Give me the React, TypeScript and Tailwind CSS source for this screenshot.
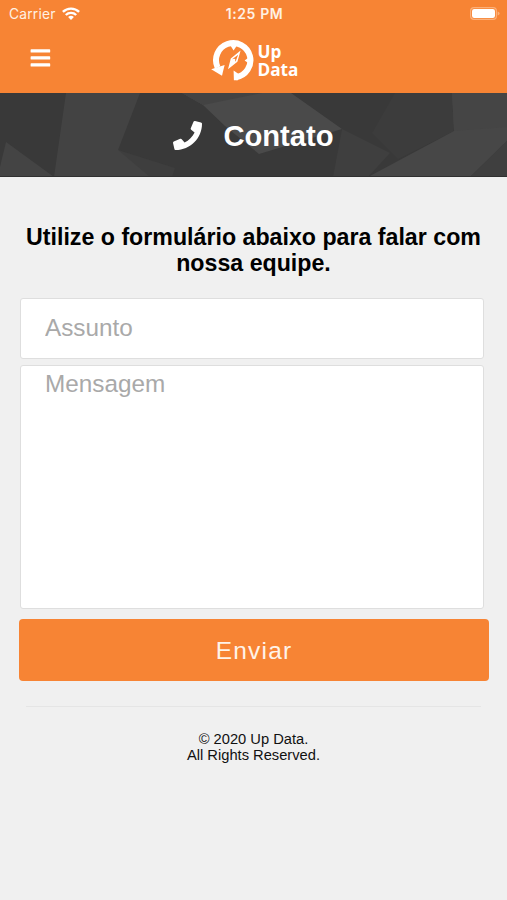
import { useState } from "react";
import { FaPhone } from "react-icons/fa";

function StatusBar() {
  return (
    <div className="grid h-7 grid-cols-3 items-center pl-[9px] pr-[7px] font-['Inter',sans-serif] text-[#fff1e4]">
      <div className="flex items-center gap-[6px]">
        <span className="pt-px text-[13.8px] leading-none tracking-[0.2px]">Carrier</span>
        <svg width="18" height="13" viewBox="0 0 18 13" fill="none" stroke="white" strokeWidth="2.4">
          <path d="M0.9 4.9a11.6 11.6 0 0 1 16.2 0" />
          <path d="M3.8 8a7.5 7.5 0 0 1 10.4 0" />
          <path d="M9 13L6.1 10.1a4.2 4.2 0 0 1 5.8 0z" fill="white" stroke="none" />
        </svg>
      </div>
      <span className="text-center text-[14px] font-semibold leading-none tracking-[0.6px]">1:25 PM</span>
      <svg className="mb-0.5 justify-self-end" width="30" height="13" viewBox="0 0 30 13">
        <rect x="0.6" y="0.6" width="25.8" height="11.8" rx="3.4" fill="none" stroke="#fbb07a" strokeWidth="1.2" />
        <rect x="2" y="2" width="23" height="9" rx="2.2" fill="white" />
        <path d="M27.6 4.5q2 0.6 2 2t-2 2z" fill="#fbb07a" />
      </svg>
    </div>
  );
}

function Logo() {
  return (
    <div className="flex h-[46px] items-center gap-px pl-[2px]">
      <svg className="mt-[3px]" width="46" height="44" viewBox="0 0 46 44" fill="white">
        {/* ring */}
        <path d="M6.6 28.4A17.2 17.2 0 1 1 25 38.2" fill="none" stroke="white" strokeWidth="6" />
        <path d="M0.2 30.2L13.6 26L11 36.8z" />
        <path d="M22.6 31.5L28 35.2L27 41.2H22.9z" />
        <path d="M18.5 5h8.4L22.6 11.5z" />
        <path d="M39 17.6v7.6L33.6 21.4z" />
        {/* needle */}
        <path fillRule="evenodd" d="M29.6 11.6L26.4 22.8L17 30.2L19.8 19.6zM27.2 15.8L21.4 20.1L24.6 22.5z" />
        <circle cx="23" cy="21" r="1.3" />
      </svg>
      <div className="mt-1 font-['Open_Sans',sans-serif] text-[17.2px] font-bold leading-[18px] text-white">
        <p>Up</p>
        <p>Data</p>
      </div>
    </div>
  );
}

function Banner() {
  return (
    <div className="relative h-[84px] overflow-hidden bg-[#393939]">
      <svg className="absolute inset-0" width="507" height="84" viewBox="0 0 507 84">
        <path d="M118 57L175 75L172 84H54z" fill="#3e3e3e" />
        <path d="M66 0H140L118 57L150 84H54L60 42z" fill="#434343" />
        <path d="M6 49L54 84H0V74z" fill="#444444" />
        <path d="M182 0H291L342 36L259 61L225 33L203 12z" fill="#4a4a4a" />
        <path d="M182 0H262L203 12z" fill="#434343" />
        <path d="M342 36L390 60L368 84H333z" fill="#3f3f3f" />
        <path d="M395 0H452L454 38L398 66L372 40z" fill="#3c3c3c" />
        <path d="M452 0H507V48L470 84H368L454 38z" fill="#474747" />
        <path d="M452 0H507V34L454 38z" fill="#454545" />
        <path d="M507 48V84H470z" fill="#3f3f3f" />
        <path d="M0 83.5H507" stroke="#303030" />
      </svg>
      <div className="relative flex h-full items-center justify-center gap-[21px] text-white">
        <FaPhone size={29} />
        <h1 className="pt-1 text-[29.2px] font-bold leading-none">Contato</h1>
      </div>
    </div>
  );
}

export default function App() {
  const [subject, setSubject] = useState("");
  const [message, setMessage] = useState("");

  return (
    <div className="min-h-screen w-[507px] bg-[#f0f0f0] font-['Liberation_Sans',Arial,sans-serif]">
      <header className="h-[93px] bg-[#f78434]">
        <StatusBar />
        <div className="grid grid-cols-3 items-center pt-2">
          <button className="pb-[3px] pl-[30px]" aria-label="Menu">
            <svg width="21" height="20" viewBox="0 0 21 20" fill="white">
              <rect x="0.6" y="1.2" width="19.6" height="3.4" rx="0.7" />
              <rect x="0.6" y="8.2" width="19.6" height="3.4" rx="0.7" />
              <rect x="0.6" y="15.2" width="19.6" height="3.4" rx="0.7" />
            </svg>
          </button>
          <div className="flex justify-center">
            <Logo />
          </div>
        </div>
      </header>

      <Banner />

      <main className="px-[19px] pt-[47px]">
        <h2 className="text-center text-[23.2px] font-bold leading-[26px] text-black">
          Utilize o formulário abaixo para falar com nossa equipe.
        </h2>

        {/* Form */}
        <form className="mt-[22px] flex flex-col pl-px" onSubmit={(e) => e.preventDefault()}>
          <input
            value={subject}
            onChange={(e) => setSubject(e.target.value)}
            placeholder="Assunto"
            className="h-[61px] w-[464px] rounded-[3px] border border-[#dedede] bg-white px-6 pb-0.5 text-[24.3px] outline-none placeholder:text-[#a9a9a9]"
          />
          <textarea
            value={message}
            onChange={(e) => setMessage(e.target.value)}
            placeholder="Mensagem"
            className="mt-1.5 h-[244px] w-[464px] resize-none rounded-[3px] border border-[#dedede] bg-white px-6 pt-1 text-[24.3px] leading-[28px] outline-none placeholder:text-[#a9a9a9]"
          />
          <button
            type="submit"
            className="-ml-px mt-2.5 h-[62px] w-[470px] rounded-[4px] bg-[#f78434] pt-0.5 text-[24.5px] tracking-[1.2px] text-[#fff3e8]"
          >
            Enviar
          </button>
        </form>

        <hr className="mx-[7px] mt-[25px] border-[#e5e5e5]" />
      </main>

      <footer className="mt-6 text-center text-[14.7px] leading-4 text-[#111]">
        <p>© 2020 Up Data.</p>
        <p>All Rights Reserved.</p>
      </footer>
    </div>
  );
}
